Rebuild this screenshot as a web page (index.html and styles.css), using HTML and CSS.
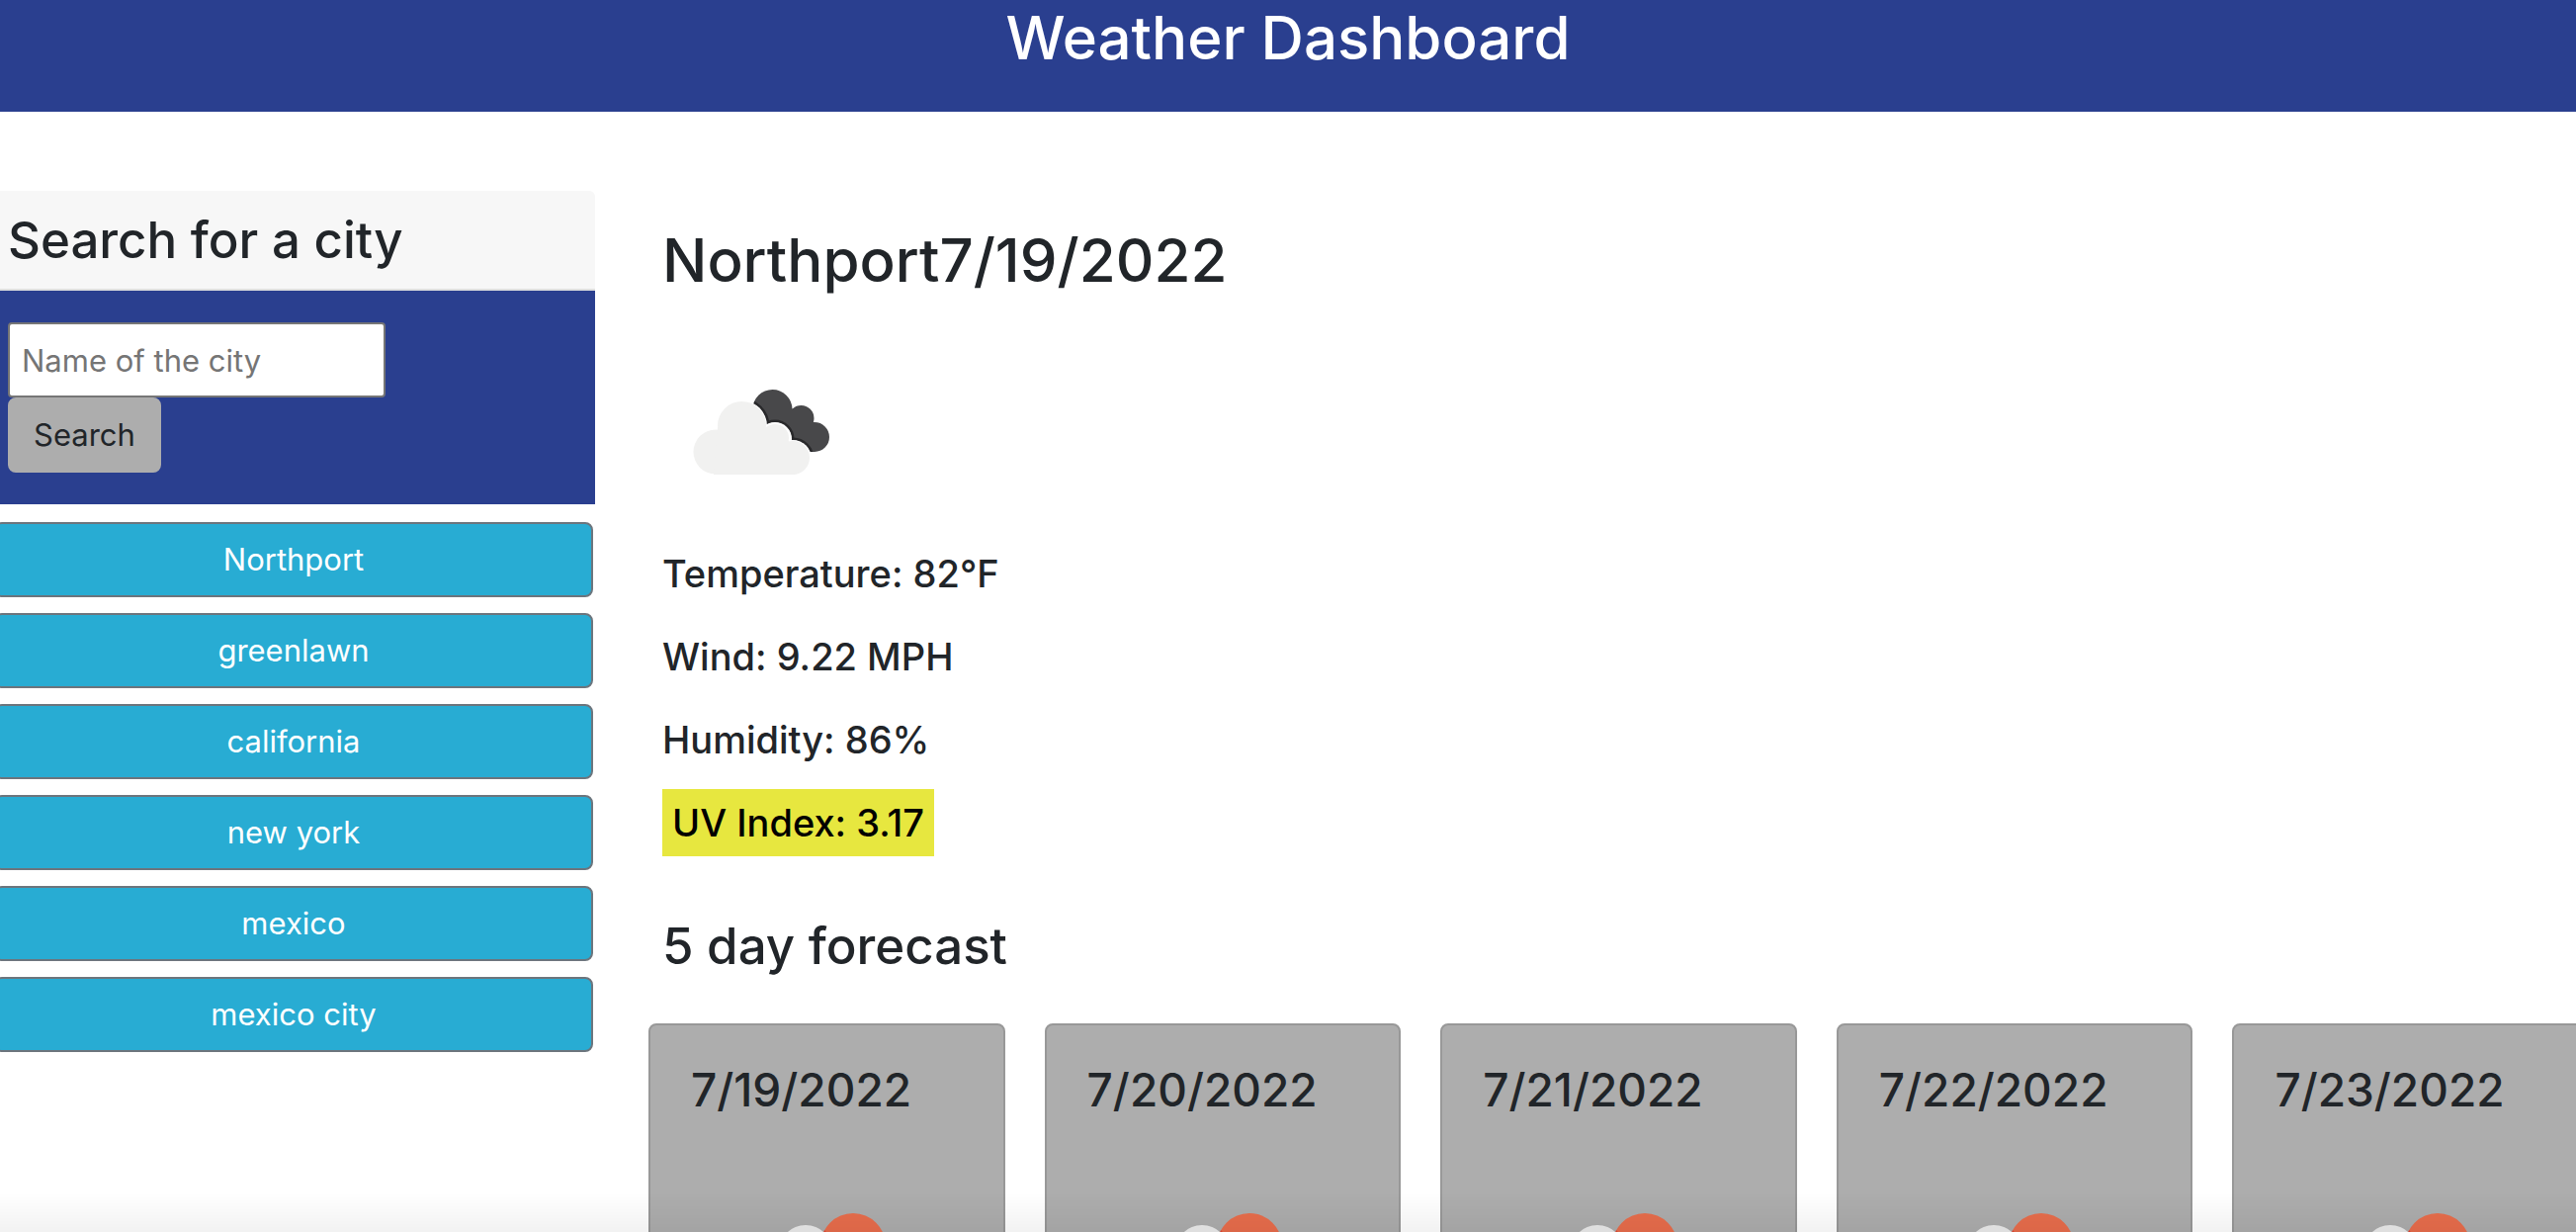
FILE: index.html
```html
<!DOCTYPE html>
<html lang="en">
<head>
<meta charset="utf-8">
<meta name="viewport" content="width=device-width, initial-scale=1">
<title>Weather Dashboard</title>
<link rel="stylesheet" href="styles.css">
</head>
<body>
<svg class="symbols" aria-hidden="true">
  <clipPath id="back-cloud">
    <circle cx="111.5" cy="76" r="20"/>
    <circle cx="140.5" cy="85" r="13"/>
    <circle cx="154" cy="104" r="15"/>
    <path d="M98 66L131 75L152 90L154 119L140 119L92 85z"/>
  </clipPath>
  <symbol id="broken-clouds" viewBox="0 0 200 200">
    <g clip-path="url(#back-cloud)">
      <rect width="200" height="200" fill="#48484a"/>
      <g fill="#fff" stroke="#29292b" stroke-width="3">
        <circle cx="80" cy="93" r="27"/>
        <circle cx="114" cy="106" r="18"/>
        <circle cx="132" cy="126" r="20"/>
      </g>
      <g fill="#fff">
        <circle cx="80" cy="93" r="26"/>
        <circle cx="114" cy="106" r="17"/>
        <circle cx="132" cy="126" r="19"/>
        <path d="M80 93L114 96L132 126L100 140z"/>
      </g>
    </g>
    <g fill="#f1f1f0">
      <circle cx="80.5" cy="92.5" r="24.5"/>
      <circle cx="114" cy="105" r="14"/>
      <circle cx="132" cy="125" r="17"/>
      <circle cx="54" cy="119" r="22.5"/>
      <path d="M56 94H101L128 108L134 142H52z"/>
    </g>
  </symbol>
  <symbol id="rain-sun" viewBox="0 0 200 200">
    <circle cx="127" cy="78" r="33" fill="#e86d4c"/>
    <path fill="#dd4535" d="M98 62q4 4 6 10l-8 0z"/>
    <g fill="#ebebeb">
      <circle cx="79" cy="84" r="27"/>
      <circle cx="114" cy="98" r="14"/>
      <circle cx="132" cy="118" r="17"/>
      <circle cx="54" cy="112" r="22"/>
      <path d="M56 88H101L128 101L134 135H52z"/>
    </g>
    <path stroke="#48484a" stroke-width="6" stroke-linecap="round" d="M68 146l-6 14M92 146l-6 14M116 146l-6 14"/>
  </symbol>
</svg>
<header class="banner"><h1>Weather Dashboard</h1></header>
<div class="layout">
  <aside class="sidebar">
    <section class="search-card">
      <h3><label for="city">Search for a city</label></h3>
      <form class="search-form">
        <input id="city" type="text" placeholder="Name of the city">
        <button class="btn btn-search" type="button">Search</button>
      </form>
    </section>
    <div class="history">
      <button class="btn btn-city" type="button">Northport</button>
      <button class="btn btn-city" type="button">greenlawn</button>
      <button class="btn btn-city" type="button">california</button>
      <button class="btn btn-city" type="button">new york</button>
      <button class="btn btn-city" type="button">mexico</button>
      <button class="btn btn-city" type="button">mexico city</button>
    </div>
  </aside>
  <main class="weather">
    <section class="current">
      <h2>Northport7/19/2022</h2>
      <svg class="icon" role="img" aria-label="Broken clouds"><use href="#broken-clouds"/></svg>
      <p>Temperature: 82°F</p>
      <p>Wind: 9.22 MPH</p>
      <p>Humidity: 86%</p>
      <p><span class="uv">UV Index: 3.17</span></p>
    </section>
    <h3 class="forecast-title">5 day forecast</h3>
    <div class="forecast">
      <article class="day"><h4>7/19/2022</h4><svg class="icon" role="img" aria-label="Rain"><use href="#rain-sun"/></svg></article>
      <article class="day"><h4>7/20/2022</h4><svg class="icon" role="img" aria-label="Rain"><use href="#rain-sun"/></svg></article>
      <article class="day"><h4>7/21/2022</h4><svg class="icon" role="img" aria-label="Rain"><use href="#rain-sun"/></svg></article>
      <article class="day"><h4>7/22/2022</h4><svg class="icon" role="img" aria-label="Rain"><use href="#rain-sun"/></svg></article>
      <article class="day"><h4>7/23/2022</h4><svg class="icon" role="img" aria-label="Rain"><use href="#rain-sun"/></svg></article>
    </div>
  </main>
</div>
<div class="edge-shade"></div>
</body>
</html>
```
FILE: styles.css
```css
*, *::before, *::after { box-sizing: border-box; }
body {
  margin: 0;
  height: 100vh;
  overflow: hidden;
  background: #fff;
  color: #212529;
  font: 400 31px/48px Inter, "Liberation Sans", sans-serif;
}
h1, h2, h3, h4, p { margin: 0; font-weight: 500; }
h1, h2 { font-size: 60px; line-height: 76px; }
h3 { font-size: 51px; line-height: 68px; }
h4 { font-size: 46px; line-height: 58px; }
.symbols { position: absolute; width: 0; height: 0; }
.banner {
  padding-bottom: 37px;
  background: #2a3f8f;
  color: #fff;
  text-align: center;
}
.layout { display: flex; align-items: flex-start; }
.sidebar { flex: 0 0 602px; padding-top: 80px; }
.search-card h3 {
  padding: 16px 8px 15px;
  background: #f7f7f7;
  border-bottom: 2px solid #dfdfdf;
  border-top-right-radius: 6px;
}
.search-form {
  display: flex;
  flex-direction: column;
  align-items: flex-start;
  padding: 32px 8px;
  background: #2a3f8f;
}
.search-form input {
  width: 382px;
  height: 76px;
  padding: 2px 12px;
  border: 2px solid #767676;
  border-radius: 4px;
  background: #fff;
  font: inherit;
}
.search-form input::placeholder { color: #757575; opacity: 1; }
.btn {
  height: 76px;
  padding: 0 24px;
  border: 2px solid transparent;
  border-radius: 8px;
  font: inherit;
  color: #212529;
}
.btn-search { background: #adadad; border-color: #adadad; }
.history {
  display: flex;
  flex-direction: column;
  gap: 16px;
  margin: 18px 2px 0 -6px;
}
.btn-city { background: #28acd3; border-color: #6c757d; color: #fff; }
.weather { flex: 1; min-width: 0; padding: 112px 0 0 54px; }
.current { padding-left: 14px; }
.current p { font-size: 38px; line-height: 48px; margin-bottom: 36px; }
.icon { display: block; width: 200px; height: 200px; }
.current .icon { margin: 37px 0 18px; }
.uv {
  display: inline-block;
  margin: -10px 0;
  padding: 10px;
  background: #e7e73f;
  color: #000;
}
.forecast-title { padding: 31px 0 0 14px; }
.forecast {
  display: grid;
  grid-template-columns: repeat(5, 1fr);
  gap: 40px;
  margin: 44px -13px 0 0;
}
.day {
  padding: 36px 41px;
  background: #adadad;
  border: 2px solid #989898;
  border-radius: 8px;
}
.day .icon { margin: 51px auto 0; }
.edge-shade {
  position: fixed;
  inset: auto 0 0;
  height: 40px;
  background: linear-gradient(transparent, rgba(0, 0, 0, .05));
  pointer-events: none;
}
```
